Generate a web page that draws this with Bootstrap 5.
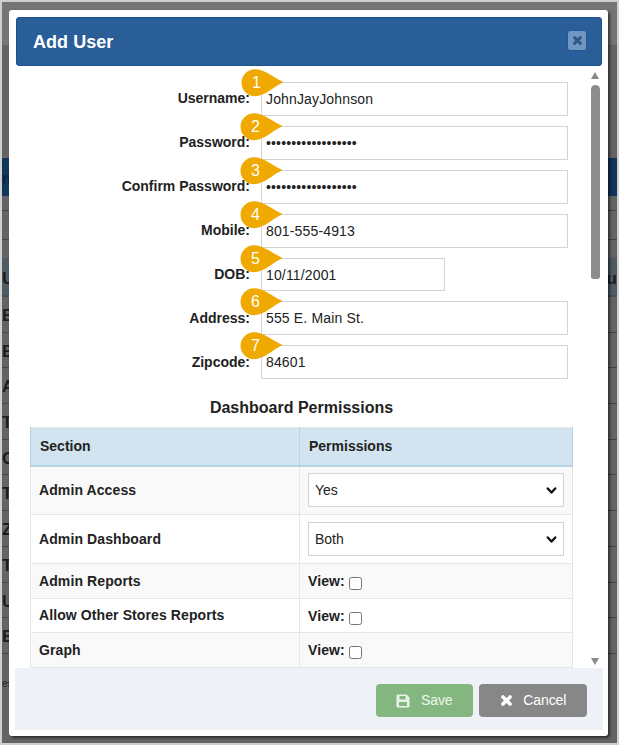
<!DOCTYPE html>
<html lang="en">
<head>
<meta charset="utf-8">
<title>Add User</title>
<link href="https://cdn.jsdelivr.net/npm/bootstrap@5.3.0/dist/css/bootstrap.min.css" rel="stylesheet">
<style>
html,body{margin:0;height:745px;overflow:hidden;background:#cfcfcf;font-family:"Liberation Sans",Arial,sans-serif;font-size:14px;color:#222}
.stage{position:relative;width:619px;height:745px;padding:2px}
.backdrop{width:615px;height:741px;background:#646464;overflow:hidden;color:#1c1c1c;font-weight:700;font-size:17px;line-height:1}
.bd-top{height:43px;background:#757575}
.bd-gap{height:113px}
.bd-blue{height:38px;background:#12355c;color:#0b2444;padding-top:12px}
.bd-line{border-bottom:1px solid #444}
.bd-head{height:39px;background:#4f5b63;border-bottom:2px solid #3e5263;padding-top:12px}
.bd-row{height:35.7px;border-bottom:1px solid #444;padding-top:10px}
.bd-note{height:36px;padding-top:25px;font-size:10px;font-weight:400;color:#222}
.panel-box{position:absolute;left:9px;top:10px;width:599px;height:726px;background:#fff;border-radius:3px;box-shadow:2px 2px 3px rgba(0,0,0,.55)}
.panel-head{position:absolute;left:7px;top:7px;width:586px;height:49px;background:#295e98;border:1px solid #1d5290;border-radius:3px;padding:0 14px 0 16px;color:#fff}
.panel-title{font-size:18px;font-weight:700;margin:0;line-height:1;letter-spacing:.04px}
.x-btn{width:20px;height:21px;padding:0;margin-bottom:2px;background:#7196c0;border:1px solid #1e5a9a;border-radius:3px;line-height:1}
.panel-scroll{position:absolute;left:0;top:57px;width:599px;height:601px;overflow:hidden;padding-top:15px}
.urow{margin-bottom:10px;position:relative}
.ulabel{width:241px;margin:0 11px 0 0;text-align:right;font-weight:700;font-size:14px;line-height:1;color:#222;padding-bottom:2px}
.ulabel.lift{padding-bottom:1px}
.uinput{width:307px;height:34px;border:1px solid #d3d3d3;border-radius:0;padding:0 4px;font-size:14px;color:#222;line-height:1;letter-spacing:.15px}
.uinput.short{width:184px;height:33px}
.drop{position:absolute;top:-13px;left:231px;width:43px;height:28px;color:#fff;font-size:16px}
.drop.nudge{left:232px}
.drop svg{position:absolute;left:0;top:0}
.drop span{position:absolute;left:0;width:31px;top:5px;text-align:center;line-height:18px}
.perm-title{font-size:16px;font-weight:700;text-align:center;margin:0 0 10px 21px;width:543px;line-height:18px;padding-top:10px;color:#222}
.perm-table{margin:0 0 0 21px;width:543px;table-layout:fixed;--bs-table-striped-bg:#f9f9f9;--bs-table-border-color:#e6e6e6;--bs-table-color:#222;--bs-table-striped-color:#222;font-size:14px;letter-spacing:.1px}
.perm-table th,.perm-table td{padding:0 8px;vertical-align:middle;font-weight:700;line-height:1}
.perm-table thead th{background:#d1e4ef;height:38px;border-color:#bcd2e0;border-bottom:2px solid #b6d3e6;padding-left:9px;letter-spacing:0}
.h-tall{height:49px}
.h-low{height:34.5px}
.psel{height:34px;border:1px solid #d3d3d3;border-radius:0;padding:0 6px;font-size:14px;color:#222;letter-spacing:0;line-height:1;background-image:url("data:image/svg+xml,%3csvg xmlns='http://www.w3.org/2000/svg' viewBox='0 0 16 16'%3e%3cpath fill='none' stroke='%23111' stroke-linecap='round' stroke-linejoin='round' stroke-width='3.4' d='m2.500 5 5.500 6 5.500-6'/%3e%3c/svg%3e");background-size:11px 11px;background-position:right 6px center}
.view-cell{padding-top:3px}
.view-cell span{line-height:14px}
.pcheck{width:13px;height:13px;margin:3px 0 0 4px;border:1px solid #767676;border-radius:2.500px;appearance:none;background:#fff;flex:none}
.sb-thumb{position:absolute;left:582px;top:75px;width:9px;height:194px;background:#8d8d8d;border-radius:5px 5px 3px 3px}
.sb-up,.sb-down{position:absolute;left:582px;width:0;height:0;border-left:4.500px solid transparent;border-right:4.500px solid transparent}
.sb-up{top:62px;border-bottom:7px solid #8a8a8a}
.sb-down{top:648px;border-top:7px solid #8a8a8a}
.panel-foot{position:absolute;left:6px;top:658px;width:588px;height:62px;background:#eef1f6;padding:16px 16px 0 0;gap:6px}
.act{height:33px;border:0;border-radius:4px;color:#fff;font-size:14px;padding:0;opacity:1;letter-spacing:-.1px}
.act-save{width:97px;background:#84b77f;color:#eef6ec}
.act-cancel{width:108px;background:#878787}
</style>
</head>
<body>
<div class="stage">
  <div class="backdrop" aria-hidden="true">
    <div class="bd-top"></div>
    <div class="bd-gap"></div>
    <div class="bd-blue">m</div>
    <div class="bd-line" style="height:15px"></div>
    <div class="bd-line" style="height:29px"></div>
    <div class="bd-gap" style="height:18px"></div>
    <div class="bd-head d-flex justify-content-between"><span>U</span><span>u</span></div>
    <div class="bd-row">E</div>
    <div class="bd-row">E</div>
    <div class="bd-row">A</div>
    <div class="bd-row">Te</div>
    <div class="bd-row">C</div>
    <div class="bd-row">T</div>
    <div class="bd-row">Z</div>
    <div class="bd-row">Ts</div>
    <div class="bd-row">U</div>
    <div class="bd-row">B</div>
    <div class="bd-note">es</div>
  </div>

  <div class="panel-box">
    <div class="panel-head d-flex align-items-center justify-content-between">
      <h5 class="panel-title">Add User</h5>
      <button type="button" class="x-btn d-flex align-items-center justify-content-center" aria-label="Close">
        <svg width="11" height="11" viewBox="0 0 12 12"><path d="M2.900 2.900 9.100 9.100M9.100 2.900 2.900 9.100" fill="none" stroke="#2c5a8d" stroke-width="3.400" stroke-linecap="round"/></svg>
      </button>
    </div>

    <div class="panel-scroll">
      <form>
        <div class="urow d-flex align-items-center">
          <label class="ulabel">Username:</label>
          <input class="uinput form-control" value="JohnJayJohnson">
          <div class="drop nudge"><svg width="43" height="28" viewBox="0 0 43 28"><path d="M14 .2C23 .2 33 8.500 42.500 13 33 17.500 24 27.200 14 27.200A13.500 13.500 0 0 1 14 .2z" fill="#f0a900"/></svg><span>1</span></div>
        </div>
        <div class="urow d-flex align-items-center">
          <label class="ulabel">Password:</label>
          <input class="uinput form-control" type="password" value="123456789012345678">
          <div class="drop"><svg width="43" height="28" viewBox="0 0 43 28"><path d="M14 .2C23 .2 33 8.500 42.500 13 33 17.500 24 27.200 14 27.200A13.500 13.500 0 0 1 14 .2z" fill="#f0a900"/></svg><span>2</span></div>
        </div>
        <div class="urow d-flex align-items-center">
          <label class="ulabel">Confirm Password:</label>
          <input class="uinput form-control" type="password" value="123456789012345678">
          <div class="drop"><svg width="43" height="28" viewBox="0 0 43 28"><path d="M14 .2C23 .2 33 8.500 42.500 13 33 17.500 24 27.200 14 27.200A13.500 13.500 0 0 1 14 .2z" fill="#f0a900"/></svg><span>3</span></div>
        </div>
        <div class="urow d-flex align-items-center">
          <label class="ulabel">Mobile:</label>
          <input class="uinput form-control" value="801-555-4913">
          <div class="drop"><svg width="43" height="28" viewBox="0 0 43 28"><path d="M14 .2C23 .2 33 8.500 42.500 13 33 17.500 24 27.200 14 27.200A13.500 13.500 0 0 1 14 .2z" fill="#f0a900"/></svg><span>4</span></div>
        </div>
        <div class="urow d-flex align-items-center">
          <label class="ulabel">DOB:</label>
          <input class="uinput short form-control" value="10/11/2001">
          <div class="drop"><svg width="43" height="28" viewBox="0 0 43 28"><path d="M14 .2C23 .2 33 8.500 42.500 13 33 17.500 24 27.200 14 27.200A13.500 13.500 0 0 1 14 .2z" fill="#f0a900"/></svg><span>5</span></div>
        </div>
        <div class="urow d-flex align-items-center">
          <label class="ulabel lift">Address:</label>
          <input class="uinput form-control" value="555 E. Main St.">
          <div class="drop"><svg width="43" height="28" viewBox="0 0 43 28"><path d="M14 .2C23 .2 33 8.500 42.500 13 33 17.500 24 27.200 14 27.200A13.500 13.500 0 0 1 14 .2z" fill="#f0a900"/></svg><span>6</span></div>
        </div>
        <div class="urow d-flex align-items-center">
          <label class="ulabel lift">Zipcode:</label>
          <input class="uinput form-control" value="84601">
          <div class="drop"><svg width="43" height="28" viewBox="0 0 43 28"><path d="M14 .2C23 .2 33 8.500 42.500 13 33 17.500 24 27.200 14 27.200A13.500 13.500 0 0 1 14 .2z" fill="#f0a900"/></svg><span>7</span></div>
        </div>

        <h6 class="perm-title">Dashboard Permissions</h6>
        <table class="table table-bordered table-striped perm-table">
          <colgroup><col style="width:269px"><col style="width:273px"></colgroup>
          <thead><tr><th>Section</th><th>Permissions</th></tr></thead>
          <tbody>
            <tr class="h-tall"><td>Admin Access</td><td><select class="form-select psel"><option>Yes</option></select></td></tr>
            <tr class="h-tall"><td>Admin Dashboard</td><td><select class="form-select psel"><option>Both</option></select></td></tr>
            <tr class="h-low"><td>Admin Reports</td><td><div class="view-cell d-flex align-items-start"><span>View:</span><input class="pcheck" type="checkbox"></div></td></tr>
            <tr class="h-low"><td>Allow Other Stores Reports</td><td><div class="view-cell d-flex align-items-start"><span>View:</span><input class="pcheck" type="checkbox"></div></td></tr>
            <tr class="h-low"><td>Graph</td><td><div class="view-cell d-flex align-items-start"><span>View:</span><input class="pcheck" type="checkbox"></div></td></tr>
          </tbody>
        </table>
      </form>
    </div>

    <div class="sb-up"></div>
    <div class="sb-thumb"></div>
    <div class="sb-down"></div>

    <div class="panel-foot d-flex justify-content-end">
      <button type="button" class="btn act act-save d-flex align-items-center justify-content-center gap-2">
        <svg width="14" height="14" viewBox="0 0 14 14"><path fill-rule="evenodd" d="M1.500 .5H10.500L13.500 3.500V12A1.500 1.500 0 0 1 12 13.500H2A1.500 1.500 0 0 1 .5 12V2A1.500 1.500 0 0 1 1.500 .5zM3.500 2V5.500H9.500V2zM3 8V12H11V8z" fill="#e8f2e6"/></svg>
        <span class="ms-1">Save</span>
      </button>
      <button type="button" class="btn act act-cancel d-flex align-items-center justify-content-center gap-2">
        <svg width="13" height="13" viewBox="0 0 12 12"><path d="M2.700 2.700 9.300 9.300M9.300 2.700 2.700 9.300" fill="none" stroke="#fff" stroke-width="3.300" stroke-linecap="round"/></svg>
        <span class="ms-1">Cancel</span>
      </button>
    </div>
  </div>
</div>
<script src="https://cdn.jsdelivr.net/npm/bootstrap@5.3.0/dist/js/bootstrap.bundle.min.js"></script>
</body>
</html>
